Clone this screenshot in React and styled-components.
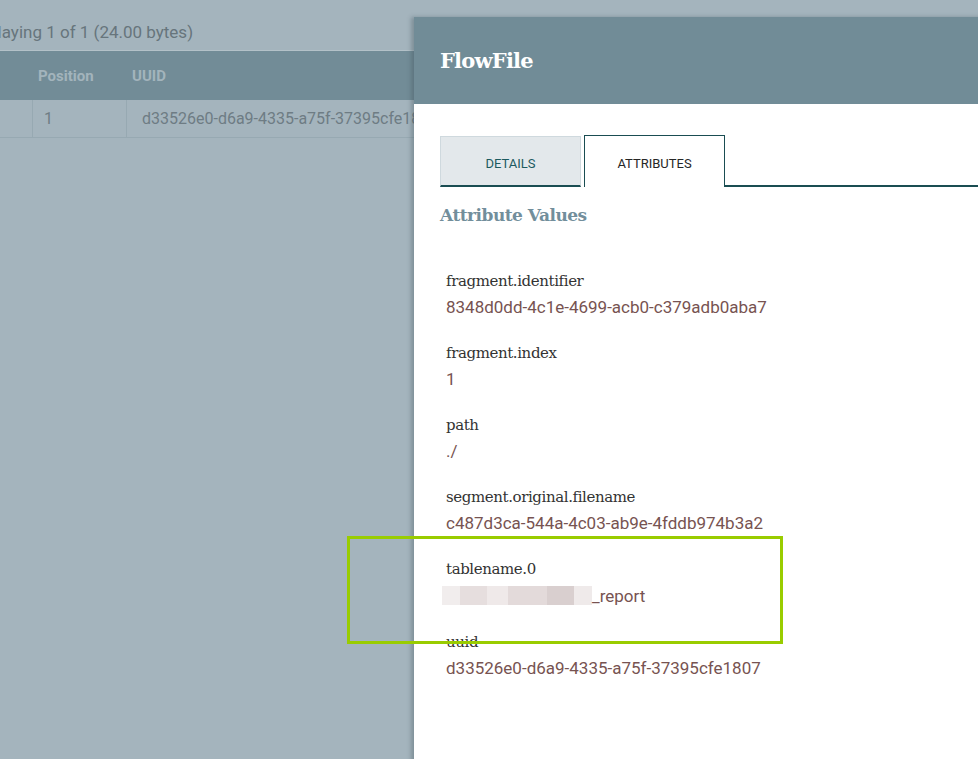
import React from 'react'
import styled, { createGlobalStyle } from 'styled-components'

const GlobalStyle = createGlobalStyle`
  html, body {
    margin: 0;
    padding: 0;
  }
  body {
    font-family: Roboto, "Liberation Sans", sans-serif;
    overflow: hidden;
  }
`

const attributes = [
  { name: 'fragment.identifier', value: '8348d0dd-4c1e-4699-acb0-c379adb0aba7' },
  { name: 'fragment.index', value: '1' },
  { name: 'path', value: './' },
  { name: 'segment.original.filename', value: 'c487d3ca-544a-4c03-ab9e-4fddb974b3a2' },
  { name: 'tablename.0', value: '_report', redacted: true },
  { name: 'uuid', value: 'd33526e0-d6a9-4335-a75f-37395cfe1807' },
]

const App = () => (
  <>
    <GlobalStyle />
    <Page>
      <StatusBar>
        <StatusText>Displaying 1 of 1 (24.00 bytes)</StatusText>
      </StatusBar>
      <Table>
        <HeaderRow>
          <Cell width="33px" />
          <HeadCell width="94px">Position</HeadCell>
          <HeadCell>UUID</HeadCell>
        </HeaderRow>
        <Row>
          <Cell width="33px" bordered />
          <Cell width="94px" bordered>1</Cell>
          <Cell wide>d33526e0-d6a9-4335-a75f-37395cfe1807</Cell>
        </Row>
      </Table>

      <Dialog>
        <DialogHeader>
          <Title>FlowFile</Title>
        </DialogHeader>
        <DialogBody>
          <Tabs>
            <Tab>DETAILS</Tab>
            <Tab active>ATTRIBUTES</Tab>
            <TabRest />
          </Tabs>
          <SectionTitle>Attribute Values</SectionTitle>
          <AttributeList>
            {attributes.map((a) => (
              <Attribute key={a.name}>
                <AttrName>{a.name}</AttrName>
                <AttrValue>
                  {a.redacted && <Redacted />}
                  {a.value}
                </AttrValue>
              </Attribute>
            ))}
          </AttributeList>
        </DialogBody>
      </Dialog>

      <Highlight />
    </Page>
  </>
)

export default App

const Page = styled.div`
  position: relative;
  width: 100vw;
  height: 100vh;
  background: #a4b4bd;
  overflow: hidden;
`

const StatusBar = styled.div`
  height: 51px;
  border-bottom: 1px solid #b3c1c8;
  box-sizing: border-box;
  overflow: hidden;
  display: flex;
  align-items: center;
`

const StatusText = styled.div`
  margin-left: -36px;
  padding-top: 14px;
  font-size: 17px;
  color: #67757c;
  white-space: nowrap;
`

const Table = styled.div`
  display: flex;
  flex-direction: column;
`

const HeaderRow = styled.div`
  display: flex;
  height: 49px;
  background: #728c97;
`

const Row = styled.div`
  display: flex;
  height: 37px;
  border-bottom: 1px solid #97a9b2;
`

const Cell = styled.div`
  flex: ${(p) => (p.width ? `0 0 ${p.width}` : '1 1 auto')};
  display: flex;
  align-items: center;
  padding-left: ${(p) => (p.wide ? '15px' : '11px')};
  box-sizing: border-box;
  font-size: 16px;
  color: #6e7c84;
  white-space: nowrap;
  border-right: ${(p) => (p.bordered ? '1px solid #97a9b2' : 'none')};
`

const HeadCell = styled(Cell)`
  font-weight: 700;
  font-size: 15px;
  color: #a3b4bc;
  padding-left: 5px;
`

const Dialog = styled.div`
  position: absolute;
  left: 414px;
  top: 17px;
  right: -40px;
  bottom: -20px;
  background: #fff;
  box-shadow: -3px 0 4px rgba(60, 80, 90, 0.35);
  display: flex;
  flex-direction: column;
`

const DialogHeader = styled.div`
  height: 87px;
  background: #718c97;
  display: flex;
  align-items: center;
  padding-left: 26px;
`

const Title = styled.h1`
  margin: 0;
  font-family: "DejaVu Serif", serif;
  font-weight: 700;
  font-size: 21px;
  color: #fff;
  letter-spacing: -0.8px;
`

const DialogBody = styled.div`
  padding: 31px 0 0 26px;
`

const Tabs = styled.div`
  display: flex;
  align-items: flex-end;
  height: 52px;
`

const Tab = styled.div`
  width: 141px;
  height: ${(p) => (p.active ? '52px' : '51px')};
  margin-right: ${(p) => (p.active ? '0' : '3px')};
  box-sizing: border-box;
  display: flex;
  align-items: center;
  justify-content: center;
  padding-top: 4px;
  font-size: 13px;
  color: ${(p) => (p.active ? '#262626' : '#1c5a5f')};
  background: ${(p) => (p.active ? '#fff' : '#e3e8eb')};
  border: 1px solid ${(p) => (p.active ? '#1a4d52' : '#cfd9de')};
  border-bottom: ${(p) => (p.active ? 'none' : '2px solid #1a4d52')};
`

const TabRest = styled.div`
  flex: 1;
  border-bottom: 2px solid #1a4d52;
`

const SectionTitle = styled.h2`
  margin: 18px 0 0;
  font-family: "DejaVu Serif", serif;
  font-weight: 700;
  font-size: 17px;
  color: #728e9b;
  letter-spacing: -0.5px;
`

const AttributeList = styled.div`
  padding: 47px 0 0 6px;
  display: flex;
  flex-direction: column;
  gap: 28px;
`

const Attribute = styled.div`
  display: flex;
  flex-direction: column;
  gap: 8px;
`

const AttrName = styled.div`
  font-family: "DejaVu Serif", serif;
  font-size: 15px;
  color: #333;
  line-height: 18px;
  letter-spacing: -0.4px;
`

const AttrValue = styled.div`
  display: flex;
  align-items: center;
  font-size: 17px;
  color: #775351;
  line-height: 18px;
`

const Redacted = styled.span`
  display: inline-block;
  width: 150px;
  height: 19px;
  margin-left: -4px;
  background: linear-gradient(
    90deg,
    #f1eded 0 12%,
    #e6dede 12% 30%,
    #efe9e9 30% 44%,
    #e3dada 44% 70%,
    #d9cfcf 70% 88%,
    #efeaea 88% 100%
  );
`

const Highlight = styled.div`
  position: absolute;
  left: 347px;
  top: 536px;
  width: 436px;
  height: 108px;
  box-sizing: border-box;
  border: 3px solid #99cc00;
`
